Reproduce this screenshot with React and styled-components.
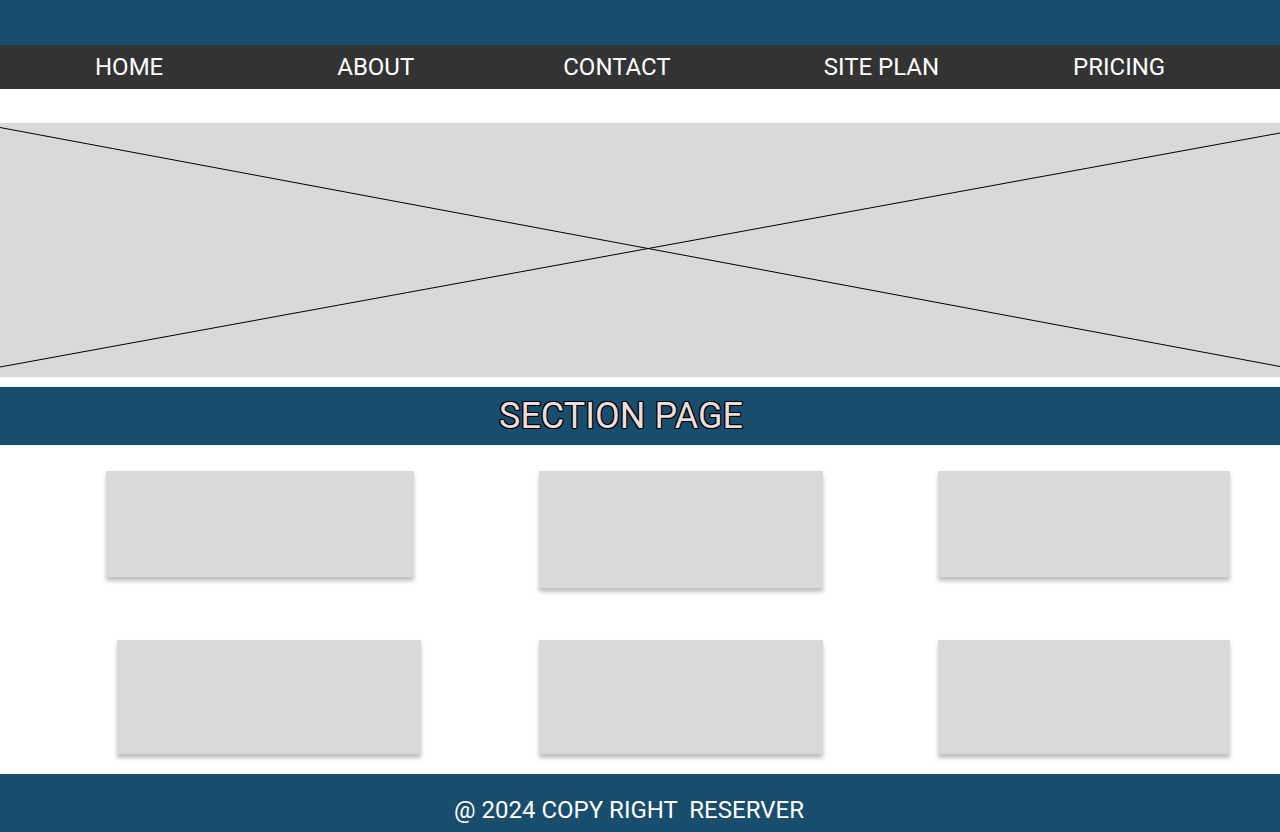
import React from 'react';
import styled, { createGlobalStyle } from 'styled-components';

const GlobalStyle = createGlobalStyle`
    body {
        margin: 0;
        background: #ffffff;
        font-family: Roboto, "Liberation Sans", sans-serif;
        overflow: hidden;
    }
`;

const Page = styled.div`
    width: 1280px;
    display: flex;
    flex-direction: column;
`;

const TopBar = styled.div`
    height: 45px;
    background: #184d6e;
`;

const NavBar = styled.nav`
    height: 44px;
    background: #333333;
    display: flex;
    align-items: center;
`;

const NavLink = styled.a`
    margin-left: ${props => props.offset}px;
    color: #ffffff;
    font-size: 24px;
    line-height: 44px;
    text-decoration: none;
    white-space: nowrap;
`;

const Hero = styled.div`
    margin-top: 34px;
    height: 254px;
    background: #d9d9d9;

    svg {
        display: block;
        width: 100%;
        height: 100%;
    }
`;

const SectionBar = styled.div`
    margin-top: 10px;
    height: 58px;
    background: #184d6e;
    display: flex;
    align-items: center;
    justify-content: center;
    padding-right: 38px;
`;

const SectionTitle = styled.h2`
    margin: 0;
    font-weight: 400;
    font-size: 36px;
    line-height: 42px;
    color: #ecdcdc;
    text-shadow: 1px 0 0 #000, -1px 0 0 #000, 0 1px 0 #000, 0 -1px 0 #000,
        1px 1px 0 #000, -1px -1px 0 #000, 1px -1px 0 #000, -1px 1px 0 #000;
`;

const Row = styled.div`
    display: flex;
    align-items: flex-start;
    margin-top: ${props => props.top}px;
`;

const Card = styled.div`
    margin-left: ${props => props.offset}px;
    width: ${props => props.w}px;
    height: ${props => props.h}px;
    background: #d9d9d9;
    box-shadow: 0 4px 4px rgba(0, 0, 0, 0.25);
`;

const Footer = styled.footer`
    margin-top: 20px;
    background: #184d6e;
    padding: 22px 22px 30px 0;
    display: flex;
    justify-content: center;
`;

const FooterText = styled.p`
    margin: 0;
    color: #ffffff;
    font-size: 24px;
    line-height: 28px;
    white-space: pre;
`;

const navItems = [
    { label: 'HOME', offset: 95 },
    { label: 'ABOUT', offset: 174 },
    { label: 'CONTACT', offset: 149 },
    { label: 'SITE PLAN', offset: 153 },
    { label: 'PRICING', offset: 134 },
];

const cardRows = [
    {
        top: 26,
        cards: [
            { offset: 106, w: 308, h: 106 },
            { offset: 125, w: 284, h: 117 },
            { offset: 115, w: 292, h: 106 },
        ],
    },
    {
        top: 52,
        cards: [
            { offset: 117, w: 304, h: 114 },
            { offset: 118, w: 284, h: 114 },
            { offset: 115, w: 292, h: 114 },
        ],
    },
];

const App = () => {
    return (
        <Page>
            <GlobalStyle />
            <TopBar />
            <NavBar>
                {navItems.map(item => (
                    <NavLink key={item.label} href="#" offset={item.offset}>{item.label}</NavLink>
                ))}
            </NavBar>
            <Hero>
                <svg viewBox="0 0 1280 254" preserveAspectRatio="none">
                    <line x1="0" y1="4.5" x2="1280" y2="243.5" stroke="#000" strokeWidth="1" />
                    <line x1="0" y1="244" x2="1280" y2="10" stroke="#000" strokeWidth="1" />
                </svg>
            </Hero>
            <SectionBar>
                <SectionTitle>SECTION PAGE</SectionTitle>
            </SectionBar>
            {cardRows.map((row, i) => (
                <Row key={i} top={row.top}>
                    {row.cards.map((card, j) => (
                        <Card key={j} offset={card.offset} w={card.w} h={card.h} />
                    ))}
                </Row>
            ))}
            <Footer>
                <FooterText>{'@ 2024 COPY RIGHT  RESERVER'}</FooterText>
            </Footer>
        </Page>
    );
};

export default App;
